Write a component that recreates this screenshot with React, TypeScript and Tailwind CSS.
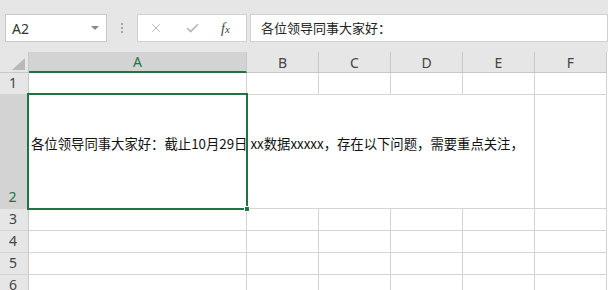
import { X, Check } from 'lucide-react';

const cols = [
  { name: 'A', w: 'w-[218px]' },
  { name: 'B', w: 'w-[72px]' },
  { name: 'C', w: 'w-[72px]' },
  { name: 'D', w: 'w-[72px]' },
  { name: 'E', w: 'w-[72px]' },
  { name: 'F', w: 'w-[72px]' },
];

const font = { fontFamily: '"Noto Sans", "Noto Sans CJK SC", sans-serif' };
const cjk = { fontFamily: '"Noto Sans CJK SC", "Noto Sans", sans-serif' };

const message = '各位领导同事大家好：截止10月29日 xx数据xxxxx，存在以下问题，需要重点关注，';

function RowHeader({ n, h, active }: { n: number; h: string; active?: boolean }) {
  return (
    <div
      className={`${h} w-[29px] shrink-0 flex items-end justify-center pr-[2px] pb-[1px] text-[14px] border-b border-[#d4d4d4] ${
        active
          ? 'bg-[#d3d3d3] text-[#217346] border-r-2 border-r-[#217346]'
          : 'bg-[#e6e6e6] text-[#444] border-r border-r-[#c8c8c8]'
      }`}
    >
      {n}
    </div>
  );
}

function PlainRow({ n }: { n: number }) {
  return (
    <div className="flex">
      <RowHeader n={n} h="h-[22px]" />
      {cols.map(c => (
        <div key={c.name} className={`${c.w} h-[22px] shrink-0 border-r border-b border-[#d4d4d4]`} />
      ))}
    </div>
  );
}

export default function App() {
  return (
    <div className="w-[608px] h-[290px] overflow-hidden bg-white select-none" style={font}>
      {/* formula bar */}
      <div className="h-[52px] bg-[#e6e6e6] flex items-start pt-[14px]">
        <div className="ml-[5px] w-[102px] h-[28px] bg-white border border-[#c6c6c6] flex items-center pl-[6px] pr-[7px]">
          <span className="text-[14px] text-[#333] flex-1">A2</span>
          <span className="w-0 h-0 border-l-[4px] border-r-[4px] border-t-[4px] border-l-transparent border-r-transparent border-t-[#8a8a8a]" />
        </div>
        <div className="w-[30px] h-[28px] flex flex-col items-center justify-center gap-[2px]">
          <span className="w-[2px] h-[2px] bg-[#a6a6a6]" />
          <span className="w-[2px] h-[2px] bg-[#a6a6a6]" />
          <span className="w-[2px] h-[2px] bg-[#a6a6a6]" />
        </div>
        <div className="w-[110px] h-[28px] bg-white border border-[#d0d0d0] flex items-center">
          <X className="ml-[11px] w-[14px] h-[14px] text-[#b4b4b4]" strokeWidth={1.6} />
          <Check className="ml-[22px] w-[15px] h-[15px] text-[#b4b4b4]" strokeWidth={2.4} />
          <span
            className="ml-[21px] text-[14px] text-[#444] italic"
            style={{ fontFamily: '"Liberation Serif", "DejaVu Serif", serif' }}
          >
            f<span className="text-[11px]">x</span>
          </span>
        </div>
        <div className="ml-[3px] flex-1 h-[28px] bg-white border border-[#d0d0d0] flex items-center pl-[10px] text-[13px] text-[#222]" style={cjk}>
          各位领导同事大家好：
        </div>
      </div>

      {/* column headers */}
      <div className="flex">
        <div className="w-[29px] h-[21px] shrink-0 bg-[#e6e6e6] border-r border-b border-[#c8c8c8] flex items-end justify-end pr-[3px] pb-[2px]">
          <svg width="13" height="12" viewBox="0 0 13 12">
            <polygon points="13,0 13,12 0,12" fill="#b9b9b9" />
          </svg>
        </div>
        {cols.map(c => (
          <div
            key={c.name}
            className={`${c.w} h-[21px] shrink-0 flex items-center justify-center text-[14px] border-r ${
              c.name === 'A'
                ? 'bg-[#d3d3d3] text-[#217346] border-r-[#c8c8c8] border-b-2 border-b-[#217346]'
                : 'bg-[#e6e6e6] text-[#444] border-r-[#c8c8c8] border-b border-b-[#c8c8c8]'
            }`}
          >
            {c.name}
          </div>
        ))}
      </div>

      <PlainRow n={1} />

      {/* row 2: tall row with overflowing text */}
      <div className="flex">
        <RowHeader n={2} h="h-[114px]" active />
        <div className="w-[218px] h-[114px] shrink-0 relative border-r border-b border-[#d4d4d4] flex items-center pb-[14px]">
          <span className="whitespace-nowrap pl-[2px] text-[13.35px] text-[#111] relative z-0" style={cjk}>
            {message}
          </span>
          <div className="absolute -left-[2px] -top-[2px] -right-[2px] -bottom-[2px] border-2 border-[#217346] z-10" />
          <div className="absolute -right-[4px] -bottom-[4px] w-[6px] h-[6px] bg-[#217346] border border-white z-20" />
        </div>
        <div className="w-[72px] h-[114px] shrink-0 border-b border-[#d4d4d4]" />
        <div className="w-[72px] h-[114px] shrink-0 border-b border-[#d4d4d4]" />
        <div className="w-[72px] h-[114px] shrink-0 border-b border-[#d4d4d4]" />
        <div className="w-[72px] h-[114px] shrink-0 border-r border-b border-[#d4d4d4]" />
        <div className="w-[72px] h-[114px] shrink-0 border-r border-b border-[#d4d4d4]" />
      </div>

      {[3, 4, 5, 6].map(n => (
        <PlainRow key={n} n={n} />
      ))}
    </div>
  );
}
